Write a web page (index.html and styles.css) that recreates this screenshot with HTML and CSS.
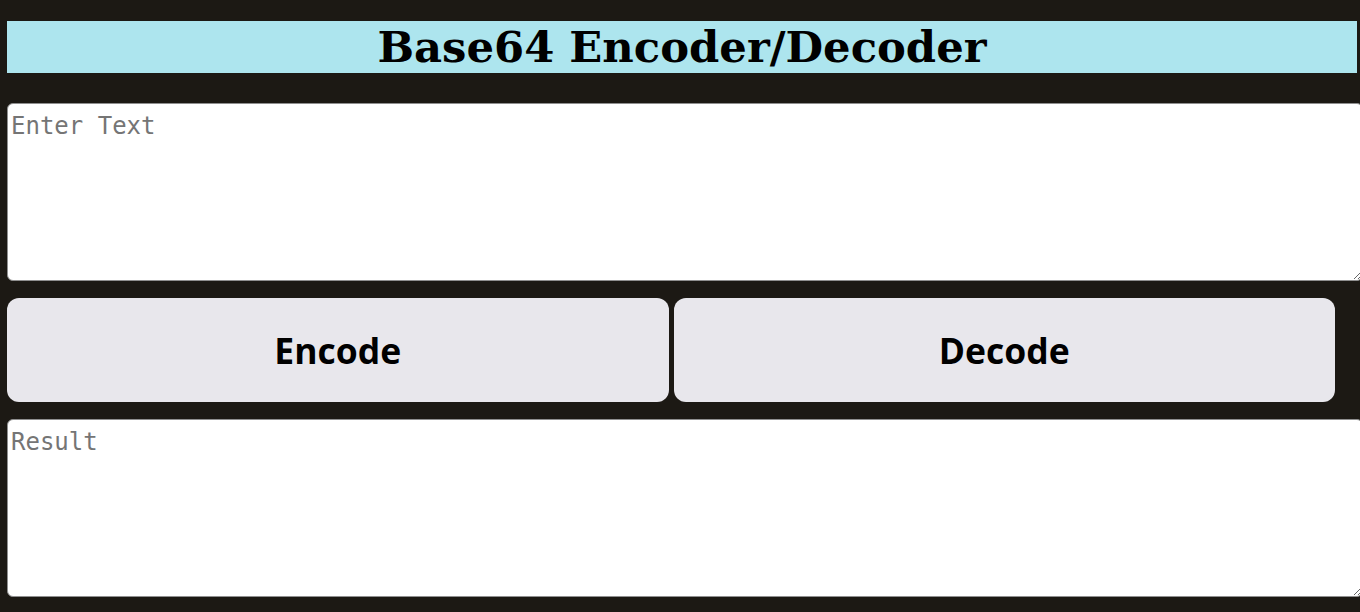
FILE: index.html
```html
<!DOCTYPE html>
<html>
<head>
<meta charset="utf-8">
<title>Base64 Encoder/Decoder</title>
<link rel="stylesheet" href="styles.css">
</head>
<body>
<h1 class="title">Base64 Encoder/Decoder</h1>
<textarea class="box" placeholder="Enter Text"></textarea>
<div class="actions">
  <button class="btn">Encode</button>
  <button class="btn">Decode</button>
</div>
<textarea class="box" placeholder="Result"></textarea>
</body>
</html>
```
FILE: styles.css
```css
html, body {
  margin: 0;
  padding: 0;
  background: #1c1914;
  overflow: hidden;
}
body {
  padding: 21px 3px 0 7px;
  display: flex;
  flex-direction: column;
}
.title {
  margin: 0 0 30px 0;
  height: 52px;
  background: #ade5ee;
  color: #000;
  font-family: "DejaVu Serif", serif;
  font-weight: bold;
  font-size: 43.3px;
  line-height: 52px;
  text-align: center;
}
.box {
  display: block;
  box-sizing: border-box;
  width: 1356px;
  height: 178px;
  margin: 0;
  padding: 8px 3px 2px 3px;
  border: 1px solid #8f8f8f;
  border-radius: 6px;
  background: #fff;
  font-family: "DejaVu Sans Mono", monospace;
  font-size: 24px;
  line-height: 28px;
  color: #000;
}
.box::placeholder {
  color: #757575;
}
.actions {
  display: flex;
  gap: 5px;
  width: 1328px;
  margin: 17px 0 17px 0;
}
.btn {
  flex: 1;
  height: 104px;
  border: none;
  border-radius: 12px;
  background: #e8e7ec;
  color: #000;
  font-family: "Open Sans", sans-serif;
  font-weight: 700;
  font-size: 35.5px;
}
```
